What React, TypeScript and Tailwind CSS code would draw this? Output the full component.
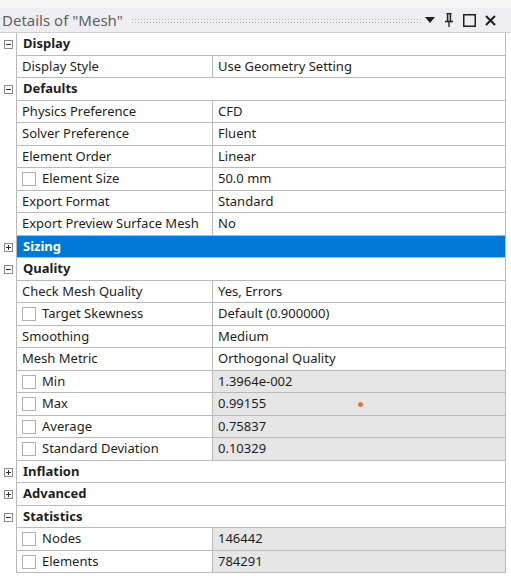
type Row =
  | { kind: "group"; label: string; open: boolean; selected?: boolean }
  | { kind: "prop"; label: string; value: string; check?: boolean; readonly?: boolean; dot?: boolean }

const rows: Row[] = [
  { kind: "group", label: "Display", open: true },
  { kind: "prop", label: "Display Style", value: "Use Geometry Setting" },
  { kind: "group", label: "Defaults", open: true },
  { kind: "prop", label: "Physics Preference", value: "CFD" },
  { kind: "prop", label: "Solver Preference", value: "Fluent" },
  { kind: "prop", label: "Element Order", value: "Linear" },
  { kind: "prop", label: "Element Size", value: "50.0 mm", check: true },
  { kind: "prop", label: "Export Format", value: "Standard" },
  { kind: "prop", label: "Export Preview Surface Mesh", value: "No" },
  { kind: "group", label: "Sizing", open: false, selected: true },
  { kind: "group", label: "Quality", open: true },
  { kind: "prop", label: "Check Mesh Quality", value: "Yes, Errors" },
  { kind: "prop", label: "Target Skewness", value: "Default (0.900000)", check: true },
  { kind: "prop", label: "Smoothing", value: "Medium" },
  { kind: "prop", label: "Mesh Metric", value: "Orthogonal Quality" },
  { kind: "prop", label: "Min", value: "1.3964e-002", check: true, readonly: true },
  { kind: "prop", label: "Max", value: "0.99155", check: true, readonly: true, dot: true },
  { kind: "prop", label: "Average", value: "0.75837", check: true, readonly: true },
  { kind: "prop", label: "Standard Deviation", value: "0.10329", check: true, readonly: true },
  { kind: "group", label: "Inflation", open: false },
  { kind: "group", label: "Advanced", open: false },
  { kind: "group", label: "Statistics", open: true },
  { kind: "prop", label: "Nodes", value: "146442", check: true, readonly: true },
  { kind: "prop", label: "Elements", value: "784291", check: true, readonly: true },
]

function ExpandBox({ open }: { open: boolean }) {
  return (
    <div className="relative w-[9px] h-[9px] border border-[#8a8a8a] bg-white">
      <div className="absolute left-[1px] top-[3px] w-[5px] h-[1px] bg-[#333]" />
      {!open && <div className="absolute left-[3px] top-[1px] w-[1px] h-[5px] bg-[#333]" />}
    </div>
  )
}

function CheckBox() {
  return <div className="w-[14px] h-[14px] border border-[#b0b0b0] bg-white shrink-0" />
}

export default function App() {
  return (
    <div
      className="w-[511px] h-[580px] bg-white overflow-hidden text-[13px] text-[#1e1e1e]"
      style={{ fontFamily: '"Noto Sans", "Open Sans", sans-serif' }}
    >
      <div className="h-[8px] bg-[#f6f6f7]" />
      {/* Title bar */}
      <div className="flex items-center h-[25px] bg-[#eeeef2] border-b border-[#d0d0d4] pl-[2px] pr-[15px]">
        <span className="text-[15px] text-[#5f5f5f] leading-none whitespace-nowrap">Details of "Mesh"</span>
        <div className="flex-1 h-[5px] ml-[8px] mr-[4px] bg-[radial-gradient(#b4b4b8_0.8px,transparent_0.9px)] bg-[length:3px_3px]" />
        <div className="flex items-center gap-[9px] text-[#1e1e1e]">
          <svg width="10" height="6" viewBox="0 0 10 6">
            <path d="M0 0 H10 L5 6 Z" fill="#1e1e1e" />
          </svg>
          <svg width="10" height="14" viewBox="0 0 10 14">
            <path d="M2.5 0.5 H7.5 M3.5 0.5 V8 M6.5 0.5 V8 M1 8.5 H9 M5 8.5 V14" stroke="#1e1e1e" strokeWidth="1.3" fill="none" />
            <rect x="3.5" y="0.5" width="3" height="7.5" fill="#1e1e1e" fillOpacity="0.25" />
          </svg>
          <svg width="13" height="13" viewBox="0 0 13 13">
            <rect x="0.75" y="0.75" width="11.5" height="11.5" stroke="#1e1e1e" strokeWidth="1.5" fill="none" />
          </svg>
          <svg width="11" height="11" viewBox="0 0 11 11">
            <path d="M1 1 L10 10 M10 1 L1 10" stroke="#1e1e1e" strokeWidth="2" />
          </svg>
        </div>
      </div>

      {/* Property grid */}
      <div className="flex flex-col">
        {rows.map((r, i) => {
          const h = i % 2 === 0 ? "h-[23px]" : "h-[22px]"
          if (r.kind === "group") {
            return (
              <div key={i} className={`flex ${h}`}>
                <div className="w-[16px] shrink-0 flex items-center justify-center">
                  <ExpandBox open={r.open} />
                </div>
                <div
                  className={`w-[490px] flex items-center pl-[6px] font-bold border-l border-r border-b border-[#b9b9b9] ${
                    r.selected ? "bg-[#0078d7] text-white" : "bg-white"
                  }`}
                >
                  {r.label}
                </div>
              </div>
            )
          }
          return (
            <div key={i} className={`flex ${h}`}>
              <div className="w-[16px] shrink-0" />
              <div className="w-[196px] flex items-center gap-[6px] pl-[5px] border-l border-b border-[#b9b9b9] bg-white whitespace-nowrap">
                {r.check && <CheckBox />}
                <span>{r.label}</span>
              </div>
              <div
                className={`relative w-[294px] flex items-center pl-[5px] border-l border-r border-b border-[#b9b9b9] ${
                  r.readonly ? "bg-[#e6e6e6]" : "bg-white"
                }`}
              >
                {r.value}
                {r.dot && <div className="absolute left-[145px] top-[9px] w-[5px] h-[5px] rounded-full bg-[#e8703a]" />}
              </div>
            </div>
          )
        })}
      </div>
    </div>
  )
}
